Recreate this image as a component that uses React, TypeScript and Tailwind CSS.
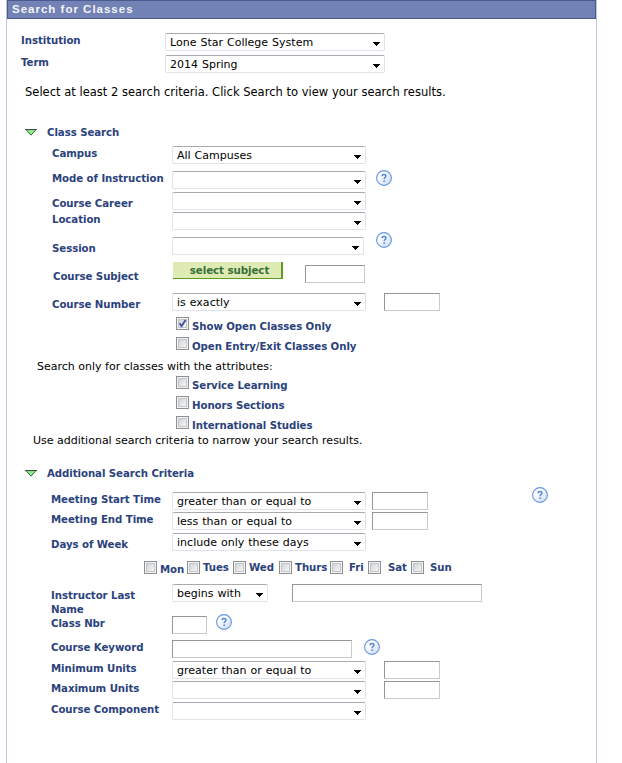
import type { ReactNode } from "react";

function Label({ children, className = "" }: { children: ReactNode; className?: string }) {
  return (
    <span className={`block shrink-0 pt-px whitespace-nowrap text-[10.2px] leading-[14px] font-bold tracking-[-0.06px] text-[#2b427c] ${className}`}>
      {children}
    </span>
  );
}

function Row({ label, labelClass = "w-[120px]", className = "", children }: { label: ReactNode; labelClass?: string; className?: string; children: ReactNode }) {
  return (
    <div className={`flex items-start ${className}`}>
      <Label className={labelClass}>{label}</Label>
      {children}
    </div>
  );
}

function Select({ value = "", className = "w-[194px]" }: { value?: string; className?: string }) {
  return (
    <div
      className={`flex h-[18px] shrink-0 items-start justify-between rounded-[2px] border border-[#e0e2ea] border-t-[#a9a9ae] bg-white pr-1 pl-[4px] ${className}`}
    >
      <span className="mt-px text-[11px] leading-4 tracking-[0.02px] [word-spacing:0.4px] whitespace-pre text-black">{value}</span>
      <svg className="mt-2 h-1 w-[7px] shrink-0" viewBox="0 0 7 4" shapeRendering="crispEdges">
        <path d="M0 0h7v1h-1v1h-1v1h-1v1h-1v-1h-1v-1h-1v-1h-1z" fill="#000" />
      </svg>
    </div>
  );
}

function Field({ className = "w-14" }: { className?: string }) {
  return (
    <input
      type="text"
      className={`block h-[18px] shrink-0 border border-t-[#959595] border-r-[#cacaca] border-b-[#cacaca] border-l-[#959595] bg-white px-1 text-[11px] outline-none ${className}`}
    />
  );
}

function Help({ className = "" }: { className?: string }) {
  return (
    <svg className={`h-4 w-4 shrink-0 ${className}`} viewBox="0 0 16 16">
      <defs>
        <linearGradient id="help" x1="0" y1="0" x2="1" y2="1">
          <stop offset="0.3" stopColor="#ffffff" />
          <stop offset="1" stopColor="#c6d9f7" />
        </linearGradient>
      </defs>
      <circle cx="8" cy="8" r="7.4" fill="url(#help)" stroke="#6493df" strokeWidth="1.1" />
      <path d="M6.2 6.2V5.4Q6.3 4.6 8.1 4.6T9.9 6Q9.9 6.9 9 7.5T8.2 9.3" fill="none" stroke="#5485d8" strokeWidth="1.5" />
      <path d="M7.3 11.2h1.8" stroke="#5485d8" strokeWidth="1.4" />
    </svg>
  );
}

function Check({ checked = false, className = "" }: { checked?: boolean; className?: string }) {
  return (
    <span className={`block h-[13px] w-[13px] shrink-0 border border-[#8e8f8f] bg-[#f4f4f4] p-px ${className}`}>
      <span className="block h-[9px] w-[9px] border border-[#c3c7cc] bg-linear-to-br from-[#cfd3d8] to-[#f6f6f6]">
        {checked && (
          <svg className="-mt-px -ml-px h-[9px] w-[9px]" viewBox="0 0 9 9">
            <path d="M1.5 4.2 3.6 7 7.6 1" fill="none" stroke="#4055a0" strokeWidth="1.9" />
          </svg>
        )}
      </span>
    </span>
  );
}

function Option({ children, checked, className = "h-5" }: { children: string; checked?: boolean; className?: string }) {
  return (
    <div className={`flex items-start pl-[169px] ${className}`}>
      <Check checked={checked} />
      <Label className="mt-0.5 ml-[3px]">{children}</Label>
    </div>
  );
}

function Heading({ children, className = "" }: { children: string; className?: string }) {
  return (
    <div className={`flex items-start pl-[18px] ${className}`}>
      <svg className="mt-1 h-[7px] w-3" viewBox="0 0 12 7">
        <path d="M1 .6h10L6 6.2z" fill="#8ff08a" stroke="#33683a" strokeWidth="1" />
        <path d="M0 .5h12" stroke="#3c4f42" />
      </svg>
      <Label className="ml-[10px]">{children}</Label>
    </div>
  );
}

export default function App() {
  return (
    <div className="min-h-[763px] bg-white pl-1.5 font-['DejaVu_Sans',Verdana,sans-serif]">
      <div className="min-h-[763px] w-[591px] border-x border-[#bfc6dc]">
        <div className="h-[19px] border border-[#4a5990] bg-[#7382b5] pl-1 font-['Liberation_Sans',Arial,sans-serif] text-[11.5px] leading-[17px] font-bold tracking-[1px] text-[#f3f4f8]">
          Search for Classes
        </div>

        <Row label="Institution" labelClass="w-[144px]" className="mt-3.5 h-[18px] pl-3.5">
          <Select value="Lone Star College System" className="w-[220px]" />
        </Row>
        <Row label="Term" labelClass="w-[144px]" className="mt-1 h-[18px] pl-3.5">
          <Select value="2014 Spring" className="w-[220px]" />
        </Row>

        <p className="mt-[11px] h-4 pl-[18px] text-[11.5px] leading-4 tracking-[0.01px] whitespace-nowrap text-black">
          Select at least 2 search criteria. Click Search to view your search results.
        </p>

        <Heading className="mt-[25px] h-[21px]">Class Search</Heading>
        <div className="pl-[45px]">
          <Row label="Campus" className="h-6">
            <Select value="All Campuses" />
          </Row>
          <Row label="Mode of Instruction" labelClass="mt-px w-[120px]" className="h-[22px]">
            <Select className="mt-px w-[194px]" />
            <Help className="ml-2.5" />
          </Row>
          <Row label="Course Career" labelClass="mt-1 w-[120px]" className="h-5">
            <Select />
          </Row>
          <Row label="Location" className="h-5">
            <Select />
          </Row>
          <Row label="Session" labelClass="mt-[9px] w-[120px]" className="h-[30px]">
            <Select className="mt-[5px] w-48" />
            <Help className="ml-3" />
          </Row>
          <Row label={<span className="pl-px">Course Subject</span>} labelClass="mt-[7px] w-[120px]" className="h-[31px]">
            <button className="ml-px h-[17px] w-[110px] border-r-2 border-b border-[#5f9a22] bg-[#dfebb4] pl-[5px] text-[10.3px] leading-[15px] font-bold tracking-[-0.08px] text-[#37703a]">
              select subject
            </button>
            <Field className="mt-[3px] ml-[22px] w-[60px]" />
          </Row>
          <Row label="Course Number" labelClass="mt-1 w-[120px]" className="h-6">
            <Select value="is exactly" />
            <Field className="ml-[18px] w-14" />
          </Row>
        </div>

        <Option checked>Show Open Classes Only</Option>
        <Option>Open Entry/Exit Classes Only</Option>
        <p className="mt-0.5 h-[17px] pl-[30px] text-[11px] leading-4 whitespace-nowrap text-black">
          Search only for classes with the attributes:
        </p>
        <Option>Service Learning</Option>
        <Option>Honors Sections</Option>
        <Option className="h-[17px]">International Studies</Option>
        <p className="h-4 pl-[26px] text-[11px] leading-4 whitespace-nowrap text-black">
          Use additional search criteria to narrow your search results.
        </p>

        <Heading className="mt-[17px] h-[21px]">Additional Search Criteria</Heading>
        <div className="pl-11">
          <Row label="Meeting Start Time" labelClass="mt-[5px] w-[121px]" className="h-[25px]">
            <Select value="greater than or equal to" className="mt-[5px] w-[194px]" />
            <Field className="mt-[5px] ml-1.5 w-14" />
            <Help className="ml-[104px]" />
          </Row>
          <Row label="Meeting End Time" labelClass="w-[121px]" className="h-[21px]">
            <Select value="less than or equal to" />
            <Field className="ml-1.5 w-14" />
          </Row>
          <Row label="Days of Week" labelClass="mt-1 w-[121px]" className="h-[27px]">
            <Select value="include only these days" />
          </Row>
        </div>

        <div className="flex h-6 items-start pl-[137px]">
          <div className="flex w-[43px]"><Check className="mt-px" /><Label className="mt-0.5 ml-[3px]">Mon</Label></div>
          <div className="flex w-[46px]"><Check className="mt-px" /><Label className="ml-[3px]">Tues</Label></div>
          <div className="flex w-[46px]"><Check className="mt-px" /><Label className="ml-[3px]">Wed</Label></div>
          <div className="flex w-[51px]"><Check className="mt-px" /><Label className="ml-[3px]">Thurs</Label></div>
          <div className="flex w-[38px]"><Check className="mt-px" /><Label className="ml-[6px]">Fri</Label></div>
          <div className="flex w-[43px]"><Check className="mt-px" /><Label className="ml-[7px]">Sat</Label></div>
          <div className="flex"><Check className="mt-px" /><Label className="ml-[6px]">Sun</Label></div>
        </div>

        <div className="pl-11">
          <Row label={<>Instructor Last<br />Name</>} labelClass="mt-1 w-[121px]" className="h-[30px]">
            <Select value="begins with" className="w-24" />
            <Field className="ml-6 w-[190px]" />
          </Row>
          <Row label="Class Nbr" labelClass="mt-0.5 w-[121px]" className="h-[25px]">
            <Field className="mt-0.5 w-[35px]" />
            <Help className="ml-[9px]" />
          </Row>
          <Row label="Course Keyword" labelClass="mt-px w-[121px]" className="h-[22px]">
            <Field className="mt-px w-[180px]" />
            <Help className="ml-3" />
          </Row>
          <Row label="Minimum Units" labelClass="w-[121px]" className="h-5">
            <Select value="greater than or equal to" />
            <Field className="ml-[18px] w-14" />
          </Row>
          <Row label="Maximum Units" labelClass="w-[121px]" className="h-[21px]">
            <Select />
            <Field className="ml-[18px] w-14" />
          </Row>
          <Row label="Course Component" labelClass="w-[121px]" className="h-[18px]">
            <Select />
          </Row>
        </div>
      </div>
    </div>
  );
}
